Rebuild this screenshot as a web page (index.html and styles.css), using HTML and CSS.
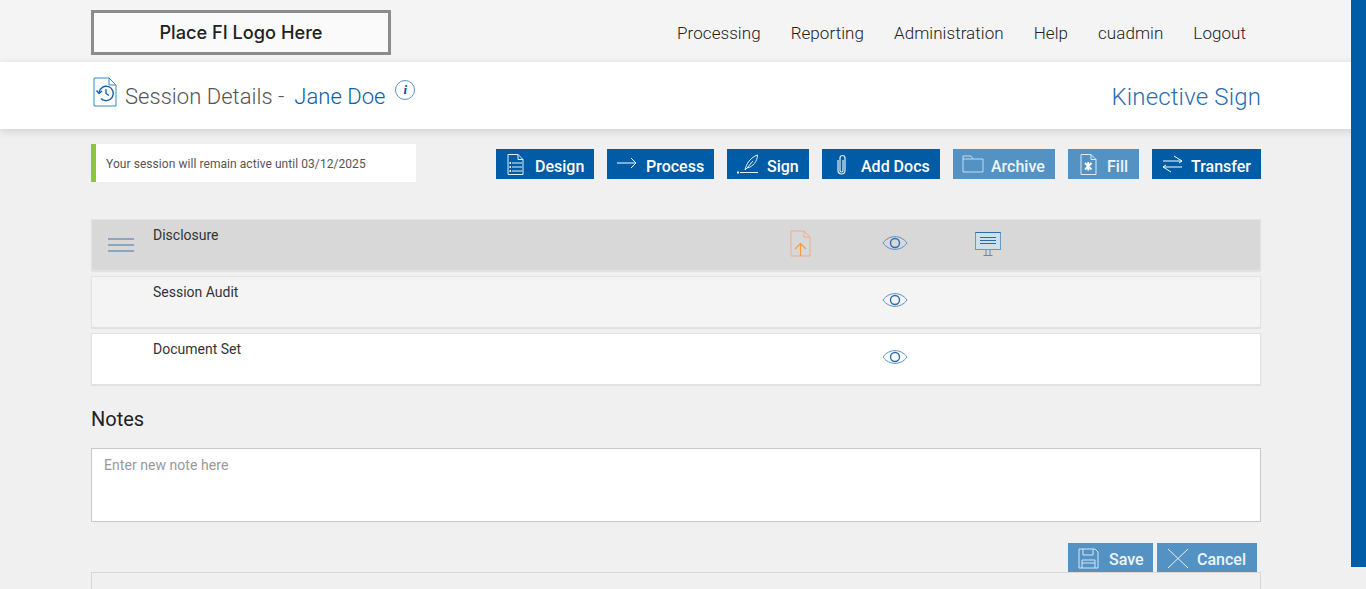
FILE: index.html
```html
<!DOCTYPE html>
<html lang="en">
<head>
<meta charset="utf-8">
<title>Session Details</title>
<link rel="stylesheet" href="styles.css">
</head>
<body>
<div class="side-bar"></div>
<header class="topbar">
  <div class="wrap topbar-inner">
    <div class="logo">Place FI Logo Here</div>
    <nav class="nav">
      <a>Processing</a><a>Reporting</a><a>Administration</a><a>Help</a><a>cuadmin</a><a>Logout</a>
    </nav>
  </div>
</header>
<section class="titlebar">
  <div class="wrap titlebar-inner">
    <div class="title">
      <svg class="title-icon" width="24" height="30" viewBox="0 0 24 30" fill="none">
        <path d="M1 1H16L23 8V29H1Z M16 1V8H23" stroke="#2f8fc4" stroke-width="1"/>
        <path d="M6 15.500A7.200 7.200 0 1 1 8 21.500" stroke="#0b5ea8" stroke-width="1.400"/>
        <path d="M3.500 13.500L6 16.500L9 14" stroke="#0b5ea8" stroke-width="1.300"/>
        <path d="M13 12V16.500L16 18.500" stroke="#0b5ea8" stroke-width="1.300"/>
      </svg>
      <span class="title-label">Session Details -</span>
      <span class="title-name">Jane Doe</span>
      <span class="info">i</span>
    </div>
    <div class="product">Kinective Sign</div>
  </div>
</section>
<main class="wrap">
  <div class="toolbar">
    <div class="notice">Your session will remain active until 03/12/2025</div>
    <div class="actions">
      <button class="btn w-design">
        <svg width="17" height="21" viewBox="0 0 17 21" fill="none" stroke="#e4f1fb"><path d="M1 .5H11L16 5.500V20.500H1Z M11 .5V5.500H16"/><path d="M5 9H15M5 13H15M5 17H15"/><path d="M2.500 9H4M2.500 13H4M2.500 17H4" stroke-width="2"/></svg>
        <span class="btn-label">Design</span></button>
      <button class="btn w-process">
        <svg class="icon-up" width="20" height="12" viewBox="0 0 20 12" fill="none" stroke="#fff"><path d="M0 6H19M14 1L19 6L14 11"/></svg>
        <span class="btn-label">Process</span></button>
      <button class="btn w-sign">
        <svg width="21" height="20" viewBox="0 0 21 20" fill="none" stroke="#e4f1fb"><path d="M3 18.500H21"/><path d="M8 16C9 10 14 3 20.500 1C20.500 7 16 13 10 14L8 16Z M10 14L16 7"/><path d="M0 18.500H2" stroke-width="2"/></svg>
        <span class="btn-label">Sign</span></button>
      <button class="btn w-docs">
        <svg width="9" height="21" viewBox="0 0 9 21" fill="none" stroke="#e4f1fb" stroke-width="1.200"><path d="M6 6V16.500A1.500 1.500 0 0 1 3 16.500V4A2.500 2.500 0 0 1 8 4V16.500A3.500 3.500 0 0 1 1 16.500V6"/></svg>
        <span class="btn-label">Add Docs</span></button>
      <button class="btn btn-muted w-archive">
        <svg width="22" height="18" viewBox="0 0 22 18" fill="none" stroke="#c5dcee"><path d="M1 17V1H9L11 4H21V17Z M1 4H11"/></svg>
        <span class="btn-label">Archive</span></button>
      <button class="btn btn-muted w-fill">
        <svg width="17" height="21" viewBox="0 0 17 21" fill="none" stroke="#dcebf6"><path d="M1 .5H11L16 5.500V20.500H1Z M11 .5V5.500H16"/><path d="M5 9L11.500 15.500M11.500 9L5 15.500M8.250 8V16.500" stroke-width="1.800" stroke="#fff"/></svg>
        <span class="btn-label">Fill</span></button>
      <button class="btn w-transfer">
        <svg width="21" height="18" viewBox="0 0 21 18" fill="none" stroke="#fff"><path d="M1 6H20L12 1M20 6L17 8M20 12H1L9 17M1 12L4 10"/></svg>
        <span class="btn-label">Transfer</span></button>
    </div>
  </div>

  <div class="rows">
    <div class="row row-active">
      <div class="row-handle">
        <svg width="26" height="14" viewBox="0 0 26 14" stroke="#3e74ab"><path d="M0 1H26M0 7H26M0 13H26"/></svg>
      </div>
      <div class="row-name">Disclosure</div>
      <div class="cell cell-upload">
        <svg width="21" height="27" viewBox="0 0 21 27" fill="none"><path d="M1 1H14L20 7V26H1Z M14 1V7H20" stroke="#f5a98b"/><path d="M10.500 26V14M5 19L10.500 13.500L16 19" stroke="#f49b42" stroke-width="1.200"/></svg>
      </div>
      <div class="cell cell-view">
        <svg class="eye" width="26" height="16" viewBox="0 0 26 16" fill="none"><path d="M1 8C7 -0.500 19 -0.500 25 8C19 16.500 7 16.500 1 8Z" stroke="#5d8fbd"/><circle cx="13" cy="8" r="4.500" stroke="#2a6db0" stroke-width="1.400"/></svg>
      </div>
      <div class="cell cell-screen">
        <svg width="26" height="26" viewBox="0 0 26 26" fill="none"><rect x="0.500" y="1.500" width="25" height="17" fill="#cfe0e8" stroke="#5b9fc4"/><path d="M0.500 1.500H25.500" stroke="#2a6db0"/><path d="M5 6.500H21M5 9.500H21M5 12.500H21" stroke="#2f6aa6"/><path d="M11 19V24M15 19V24M8.500 24.500H17.500" stroke="#4b8fc4"/></svg>
      </div>
    </div>
    <div class="row row-alt">
      <div class="row-handle"></div>
      <div class="row-name">Session Audit</div>
      <div class="cell cell-upload"></div>
      <div class="cell cell-view">
        <svg class="eye" width="26" height="16" viewBox="0 0 26 16" fill="none"><path d="M1 8C7 -0.500 19 -0.500 25 8C19 16.500 7 16.500 1 8Z" stroke="#5d8fbd"/><circle cx="13" cy="8" r="4.500" stroke="#2a6db0" stroke-width="1.400"/></svg>
      </div>
    </div>
    <div class="row row-plain">
      <div class="row-handle"></div>
      <div class="row-name">Document Set</div>
      <div class="cell cell-upload"></div>
      <div class="cell cell-view">
        <svg class="eye" width="26" height="16" viewBox="0 0 26 16" fill="none"><path d="M1 8C7 -0.500 19 -0.500 25 8C19 16.500 7 16.500 1 8Z" stroke="#5d8fbd"/><circle cx="13" cy="8" r="4.500" stroke="#2a6db0" stroke-width="1.400"/></svg>
      </div>
    </div>
  </div>

  <h2 class="notes-title">Notes</h2>
  <textarea class="notes-input" placeholder="Enter new note here"></textarea>
  <div class="form-actions">
    <button class="btn btn-muted w-save">
      <svg width="21" height="21" viewBox="0 0 21 21" fill="none" stroke="#d5e6f3"><path d="M1 1H17L20 4V20H1Z"/><path d="M5 1V7H15V1M4 20V12H17V20M4 15H17"/></svg>
      <span class="btn-label">Save</span></button>
    <button class="btn btn-muted w-cancel">
      <svg width="22" height="21" viewBox="0 0 22 21" fill="none" stroke="#e8f1f8"><path d="M1 1L21 20M21 1L1 20"/></svg>
      <span class="btn-label">Cancel</span></button>
  </div>
  <div class="lower-panel"></div>
</main>
</body>
</html>
```

FILE: styles.css
```css
* { box-sizing: border-box; }
html, body { height: 589px; overflow: hidden; }
body {
  margin: 0;
  background: #f0f0f0;
  font-family: Roboto, "Liberation Sans", sans-serif;
  color: #333;
}
.wrap { width: 1170px; margin-left: 91px; }

.side-bar {
  position: absolute;
  top: 0;
  right: 0;
  width: 15px;
  height: 567px;
  background: #005ca6;
  z-index: 5;
}

.topbar { height: 62px; background: #f4f4f4; }
.topbar-inner { display: flex; justify-content: space-between; padding-top: 10px; }
.logo {
  width: 300px;
  height: 45px;
  border: 3px solid #8c8c8c;
  background: #fafafa;
  font-family: Inter, sans-serif;
  font-size: 18.2px;
  font-weight: 500;
  line-height: 38px;
  text-align: center;
  color: #222;
}
.nav { display: flex; gap: 30px; padding: 14px 15px 0 0; font-size: 17px; font-weight: 300; letter-spacing: 0.06px; line-height: 19px; color: #222; }

.titlebar {
  position: relative;
  height: 67px;
  background: #fff;
  box-shadow: 0 2px 8px rgba(0, 0, 0, 0.14);
}
.titlebar-inner { display: flex; justify-content: space-between; }
.title { display: flex; align-items: flex-start; padding: 15px 0 0 2px; font-weight: 300; font-size: 22px; line-height: 40px; letter-spacing: 0.03px; }
.title-icon { margin: 0 8px 0 0; }
.title-label { color: #555; }
.title-name { color: #0b5ea8; margin-left: 10px; }
.info {
  width: 20px;
  height: 20px;
  margin: 3px 0 0 10px;
  border: 1px solid #5b93c4;
  border-radius: 50%;
  font-family: "Liberation Serif", serif;
  font-style: italic;
  font-weight: 700;
  font-size: 13px;
  line-height: 17px;
  text-align: center;
  color: #0b4f8f;
}
.product { padding-top: 15px; font-size: 24px; font-weight: 300; line-height: 40px; letter-spacing: 0.15px; color: #2a6db0; }

.toolbar { display: flex; justify-content: space-between; padding-top: 15px; height: 90px; }
.notice {
  width: 325px;
  height: 38px;
  background: #fff;
  border-left: 5px solid #8cc63f;
  padding: 1px 0 0 10px;
  font-size: 12px;
  letter-spacing: 0.06px;
  line-height: 38px;
  color: #555;
}
.actions { display: flex; gap: 13px; padding-top: 5px; }
.btn {
  display: flex;
  align-items: center;
  height: 30px;
  padding: 0 0 0 10px;
  border: 0;
  background: #005ca6;
  color: #fff;
  font-family: Roboto, sans-serif;
  font-size: 16px;
  font-weight: 500;
  line-height: 30px;
  white-space: nowrap;
}
.btn svg { flex: none; margin-right: 10px; }
.btn .icon-up { margin-top: -2px; margin-right: 9px; }
.btn-label { padding-top: 5px; }
.btn-muted { background: #5592c4; color: #eef5fa; }
.w-design { width: 98px; padding-left: 11px; }
.w-design svg { margin-right: 11px; }
.w-process { width: 107px; }
.w-sign { width: 82px; }
.w-sign svg { margin-right: 9px; }
.w-docs { width: 118px; padding-left: 15px; }
.w-docs svg { margin-right: 15px; }
.w-archive { width: 102px; padding-left: 9px; }
.w-archive svg { margin-right: 7px; }
.w-fill { width: 71px; padding-left: 12px; }
.w-transfer { width: 109px; }
.w-transfer svg { margin-right: 8px; }
.w-save { width: 85px; }
.w-cancel { width: 100px; }
.w-cancel svg { margin-right: 8px; }

.rows { display: flex; flex-direction: column; gap: 5px; }
.row {
  display: flex;
  height: 52px;
  border: 1px solid #e2e2e2;
  box-shadow: 0 1px 1px rgba(0, 0, 0, 0.06);
  font-size: 14px;
  color: #333;
}
.row-active { background: #d8d8d8; border-color: #e4e4e4; }
.row-alt { background: #f4f4f4; }
.row-plain { background: #fff; }
.row-handle { width: 61px; padding: 18px 0 0 16px; }
.row-handle svg { display: block; }
.row-name { width: 625px; padding-top: 7px; line-height: 16px; }
.cell { display: flex; justify-content: center; }
.cell-upload { width: 45px; padding-top: 10px; }
.cell-view { width: 94px; padding: 15px 0 0 49px; }
.cell-screen { width: 94px; padding: 11px 0 0 48px; }

.notes-title { margin: 23px 0 17px; font-size: 20px; font-weight: 400; line-height: 23px; color: #222; }
.notes-input {
  display: block;
  width: 100%;
  height: 74px;
  padding: 8px 12px;
  border: 1px solid #c8c8c8;
  background: #fff;
  resize: none;
  font-family: Roboto, sans-serif;
  font-size: 14px;
  letter-spacing: 0.05px;
  line-height: 17px;
}
.notes-input::placeholder { color: #999; opacity: 1; }

.form-actions { display: flex; justify-content: flex-end; gap: 4px; padding: 21px 4px 0 0; }
.form-actions .btn-label { padding-top: 3px; }
.lower-panel { position: relative; height: 40px; margin-top: -1px; border: 1px solid #d8d8d8; }
```
